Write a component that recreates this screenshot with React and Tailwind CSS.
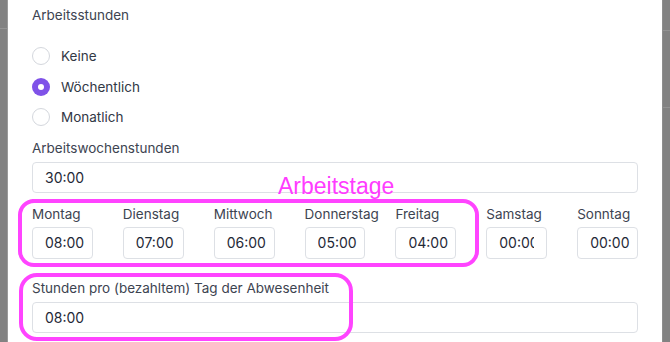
import { useState } from "react";

const days = [
    { name: "Montag", value: "08:00" },
    { name: "Dienstag", value: "07:00" },
    { name: "Mittwoch", value: "06:00" },
    { name: "Donnerstag", value: "05:00" },
    { name: "Freitag", value: "04:00" },
    { name: "Samstag", value: "00:00", tight: true },
    { name: "Sonntag", value: "00:00" },
];

const options = ["Keine", "Wöchentlich", "Monatlich"];

function Radio({ label, checked, onSelect }) {
    return (
        <label className="flex items-center h-[30.5px] cursor-pointer" onClick={onSelect}>
            {checked ? (
                <span className="w-[18px] h-[18px] rounded-full bg-[#7f52e8] flex items-center justify-center">
                    <span className="w-[6px] h-[6px] rounded-full bg-white"></span>
                </span>
            ) : (
                <span className="w-[18px] h-[18px] rounded-full border border-[#d4d7dd] bg-white"></span>
            )}
            <span className="ml-[11px] text-[13.5px] text-[#323845]">{label}</span>
        </label>
    );
}

function TextInput({ value, className }) {
    return (
        <input type="text"
            defaultValue={value}
            readOnly
            className={"block w-full pl-3 text-[14px] text-[#1f2937] bg-white border border-[#dde0e5] rounded focus:outline-none font-['Inter',sans-serif] " + className} />
    );
}

export default function App() {
    const [mode, setMode] = useState("Wöchentlich");

    return (
        <div className="w-[670px] h-[342px] flex bg-[#828282] overflow-hidden relative font-['Inter',sans-serif]">
            <div className="w-[8px] h-full border-r border-[#9b9b9b] relative">
                <div className="absolute top-[28px] left-0 w-full h-px bg-[#959595]"></div>
            </div>
            <div className="w-[654px] h-full bg-white px-6 pt-[5px]">
                <p className="text-[13.5px] leading-5 text-[#3d4451]">Arbeitsstunden</p>
                <div className="mt-[16px] flex flex-col">
                    {options.map((o) => (
                        <Radio key={o} label={o} checked={mode === o} onSelect={() => setMode(o)} />
                    ))}
                </div>
                <p className="mt-[5px] text-[13.5px] leading-5 text-[#3d4451]">Arbeitswochenstunden</p>
                <TextInput value="30:00" className="mt-[4px] h-[31px] pr-3" />
                <div className="mt-[11px] grid grid-cols-7 gap-x-[30px]">
                    {days.map((d) => (
                        <div key={d.name} className="flex flex-col">
                            <p className="text-[13.5px] leading-5 text-[#3d4451] whitespace-nowrap">{d.name}</p>
                            <TextInput value={d.value} className={d.tight ? "mt-[3px] h-[32px] pr-3" : "mt-[3px] h-[32px] pr-1"} />
                        </div>
                    ))}
                </div>
                <p className="mt-[19px] text-[13.5px] leading-5 text-[#3d4451]">Stunden pro (bezahltem) Tag der Abwesenheit</p>
                <TextInput value="08:00" className="mt-[4px] h-[31px] pr-3" />
            </div>
            <div className="flex-1 h-full border-l border-[#8e8e8e] relative">
                <div className="absolute top-[30px] left-0 w-full h-px bg-[#939393]"></div>
                <div className="absolute top-[107px] left-0 w-full h-px bg-[#939393]"></div>
            </div>

            {/* annotations */}
            <p className="absolute left-[278px] top-[174px] text-[23px] leading-6 text-[#ff3cff] font-['Liberation_Sans',Arial,sans-serif]">Arbeitstage</p>
            <div className="absolute left-[18px] top-[199px] w-[461px] h-[68px] border-4 border-[#ff44ff] rounded-[16px]"></div>
            <div className="absolute left-[19px] top-[273px] w-[334px] h-[68px] border-4 border-[#ff44ff] rounded-[18px]"></div>
        </div>
    );
}
